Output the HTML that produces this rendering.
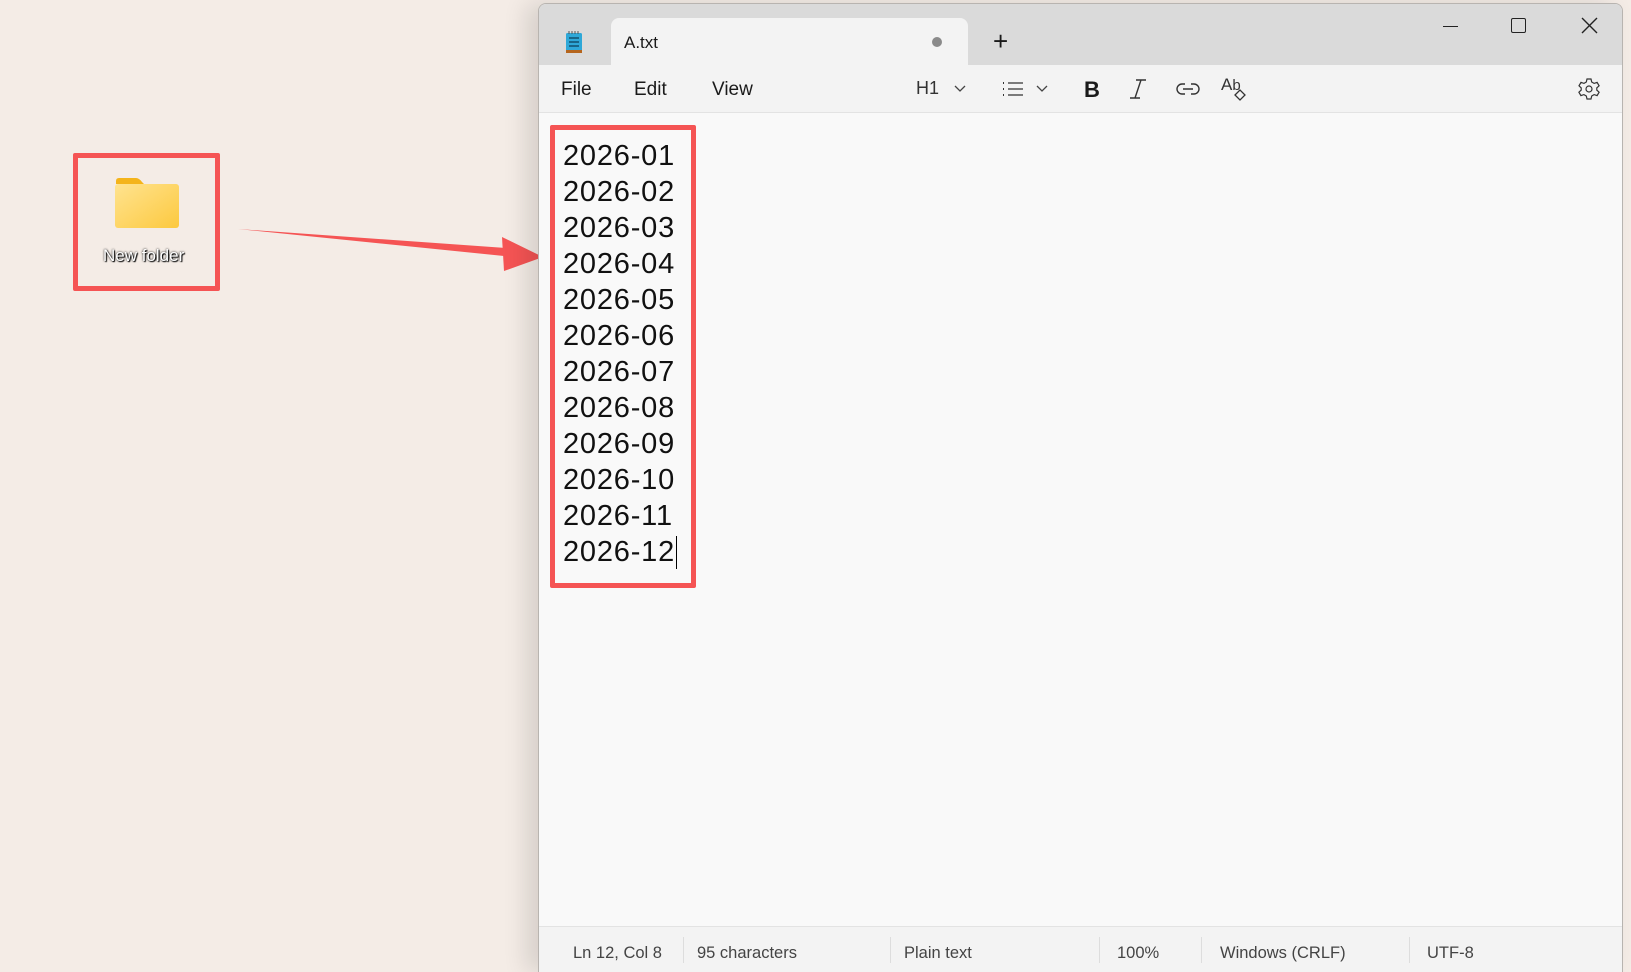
<!DOCTYPE html>
<html style="width:1631px;height:972px;overflow:hidden"><head><meta charset="utf-8"><style>
*{margin:0;padding:0;box-sizing:border-box}
body{width:1631px;height:972px;background:#f4ece6;position:relative;overflow:hidden;font-family:"Segoe UI","Liberation Sans",sans-serif;color:#1a1a1a}
.abs{position:absolute}
.win{left:538px;top:3px;width:1085px;height:969px;background:#f9f9f9;border:1px solid #b8b4b0;border-bottom:none;border-radius:8px 8px 0 0;overflow:hidden;box-shadow:-12px 0 24px rgba(0,0,0,0.12)}
.tabbar{left:0;top:0;width:100%;height:61px;background:#dadada}
.tab{left:72px;top:14px;width:357px;height:50px;background:#f3f3f3;border-radius:8px 8px 0 0}
.toolbar{left:0;top:61px;width:100%;height:48px;background:#f3f3f3;border-bottom:1px solid #e3e3e3}
.status{left:0;top:922px;width:100%;height:60px;background:#f3f3f3;border-top:1px solid #e3e3e3}
.t{position:absolute;font-size:19px;white-space:nowrap;line-height:1}
.s{position:absolute;font-size:16.5px;color:#444;top:17px;white-space:nowrap}
.sep{position:absolute;top:10px;width:1px;height:26px;background:#ddd}
.lines{left:563px;top:138px;font-size:29px;line-height:36px;letter-spacing:0.8px;font-family:"Liberation Sans",sans-serif;color:#111}
</style></head><body>
<div class="abs" style="left:73px;top:153px;width:147px;height:138px;border:5px solid #f55454;border-radius:2px"></div>
<svg class="abs" style="left:114px;top:177px" width="66" height="52" viewBox="0 0 66 52">
<defs><linearGradient id="g" x1="0" y1="0" x2="1" y2="1"><stop offset="0" stop-color="#ffe38f"/><stop offset="1" stop-color="#fcc93f"/></linearGradient></defs>
<path d="M2 4 Q2 1 5 1 H22 Q25 1 28 5 L30 7 H2 Z" fill="#f4b41a"/>
<rect x="1" y="7" width="64" height="44" rx="3" fill="url(#g)"/>
</svg>
<div class="abs" style="left:103px;top:246px;font-size:17px;color:#fff;font-family:'Liberation Sans',sans-serif;text-shadow:1px 1px 1px #000,0 0 2px #000">New folder</div>
<svg class="abs" style="left:0;top:0" width="560" height="300">
<path d="M238 229 L506 248 L504 256 Z" fill="#f55454"/>
<path d="M543 257 L502 237 L504 271 Z" fill="#f55454"/>
</svg>
<div class="abs win">
 <div class="abs tabbar"></div>
 <div class="abs tab"></div>
 <svg class="abs" style="left:26px;top:26px" width="18" height="24" viewBox="0 0 18 24">
  <rect x="1" y="3" width="16" height="19" rx="1.5" fill="#2ea8d8"/>
  <rect x="1" y="20" width="16" height="3" fill="#b5651d"/>
  <path d="M4 8h10M4 12h10M4 16h10" stroke="#10506e" stroke-width="1.6"/>
  <path d="M4 1v3M7 1v3M10 1v3M13 1v3" stroke="#555" stroke-width="1"/>
 </svg>
 <div class="t" style="left:85px;top:30px;font-size:17px">A.txt</div>
 <div class="abs" style="left:393px;top:33px;width:10px;height:10px;border-radius:50%;background:#8a8a8a"></div>
 <div class="t" style="left:454px;top:24px;font-size:26px;font-weight:300">+</div>
 <div class="abs" style="left:904px;top:22px;width:15px;height:1px;background:#222"></div>
 <div class="abs" style="left:972px;top:14px;width:15px;height:15px;border:1.5px solid #222;border-radius:2px"></div>
 <svg class="abs" style="left:1042px;top:13px" width="17" height="17"><path d="M1 1L16 16M16 1L1 16" stroke="#222" stroke-width="1.4"/></svg>
 <div class="abs toolbar">
  <div class="t" style="left:22px;top:15px">File</div>
  <div class="t" style="left:95px;top:15px">Edit</div>
  <div class="t" style="left:173px;top:15px">View</div>
  <div class="t" style="left:377px;top:14px;font-size:18px;color:#333">H1</div>
  <svg class="abs" style="left:415px;top:20px" width="12" height="8"><path d="M1 1l5 5 5-5" fill="none" stroke="#444" stroke-width="1.3"/></svg>
  <svg class="abs" style="left:462px;top:15px" width="24" height="18"><path d="M2 3h1M2 9h1M2 15h1" stroke="#333" stroke-width="2"/><path d="M7 3h15M7 9h15M7 15h15" stroke="#333" stroke-width="1.3"/></svg>
  <svg class="abs" style="left:497px;top:20px" width="12" height="8"><path d="M1 1l5 5 5-5" fill="none" stroke="#444" stroke-width="1.3"/></svg>
  <div class="t" style="left:545px;top:14px;font-size:22px;font-weight:bold;font-family:'Liberation Sans',sans-serif">B</div>
  <svg class="abs" style="left:590px;top:13px" width="18" height="22"><path d="M7 2h10M1 20h10M12 2L6 20" stroke="#333" stroke-width="1.4" fill="none"/></svg>
  <svg class="abs" style="left:637px;top:17px" width="24" height="14"><path d="M9 2H6a5 5 0 0 0 0 10h3M15 2h3a5 5 0 0 1 0 10h-3M7 7h10" stroke="#333" stroke-width="1.4" fill="none"/></svg>
  <div class="t" style="left:682px;top:11px;font-size:17px;color:#333">A<span style="font-size:15px">b</span></div>
  <svg class="abs" style="left:694px;top:22px" width="14" height="14"><path d="M2 8l5-5 5 5-5 5z" stroke="#333" stroke-width="1.3" fill="none"/></svg>
  <svg class="abs" style="left:1039px;top:13px" width="22" height="22" viewBox="0 0 22 22"><path d="M9 1h4l.7 3 2.4 1.4 3-1 2 3.4-2.3 2.1v2.2l2.3 2.1-2 3.4-3-1-2.4 1.4-.7 3H9l-.7-3-2.4-1.4-3 1-2-3.4 2.3-2.1V9.9L1 7.8l2-3.4 3 1L8.3 4z" fill="none" stroke="#333" stroke-width="1.2"/><circle cx="11" cy="11" r="3" fill="none" stroke="#333" stroke-width="1.2"/></svg>
 </div>
 <div class="abs status">
  <div class="s" style="left:34px">Ln 12, Col 8</div>
  <div class="sep" style="left:144px"></div>
  <div class="s" style="left:158px">95 characters</div>
  <div class="sep" style="left:351px"></div>
  <div class="s" style="left:365px">Plain text</div>
  <div class="sep" style="left:560px"></div>
  <div class="s" style="left:578px">100%</div>
  <div class="sep" style="left:662px"></div>
  <div class="s" style="left:681px">Windows (CRLF)</div>
  <div class="sep" style="left:870px"></div>
  <div class="s" style="left:888px">UTF-8</div>
 </div>
</div>
<div class="abs" style="left:550px;top:125px;width:146px;height:463px;border:5px solid #f55454;border-radius:2px"></div>
<div class="abs lines">2026-01<br>2026-02<br>2026-03<br>2026-04<br>2026-05<br>2026-06<br>2026-07<br>2026-08<br>2026-09<br>2026-10<br>2026-11<br>2026-12</div>
<div class="abs" style="left:676px;top:536px;width:1px;height:33px;background:#000"></div>
</body></html>
